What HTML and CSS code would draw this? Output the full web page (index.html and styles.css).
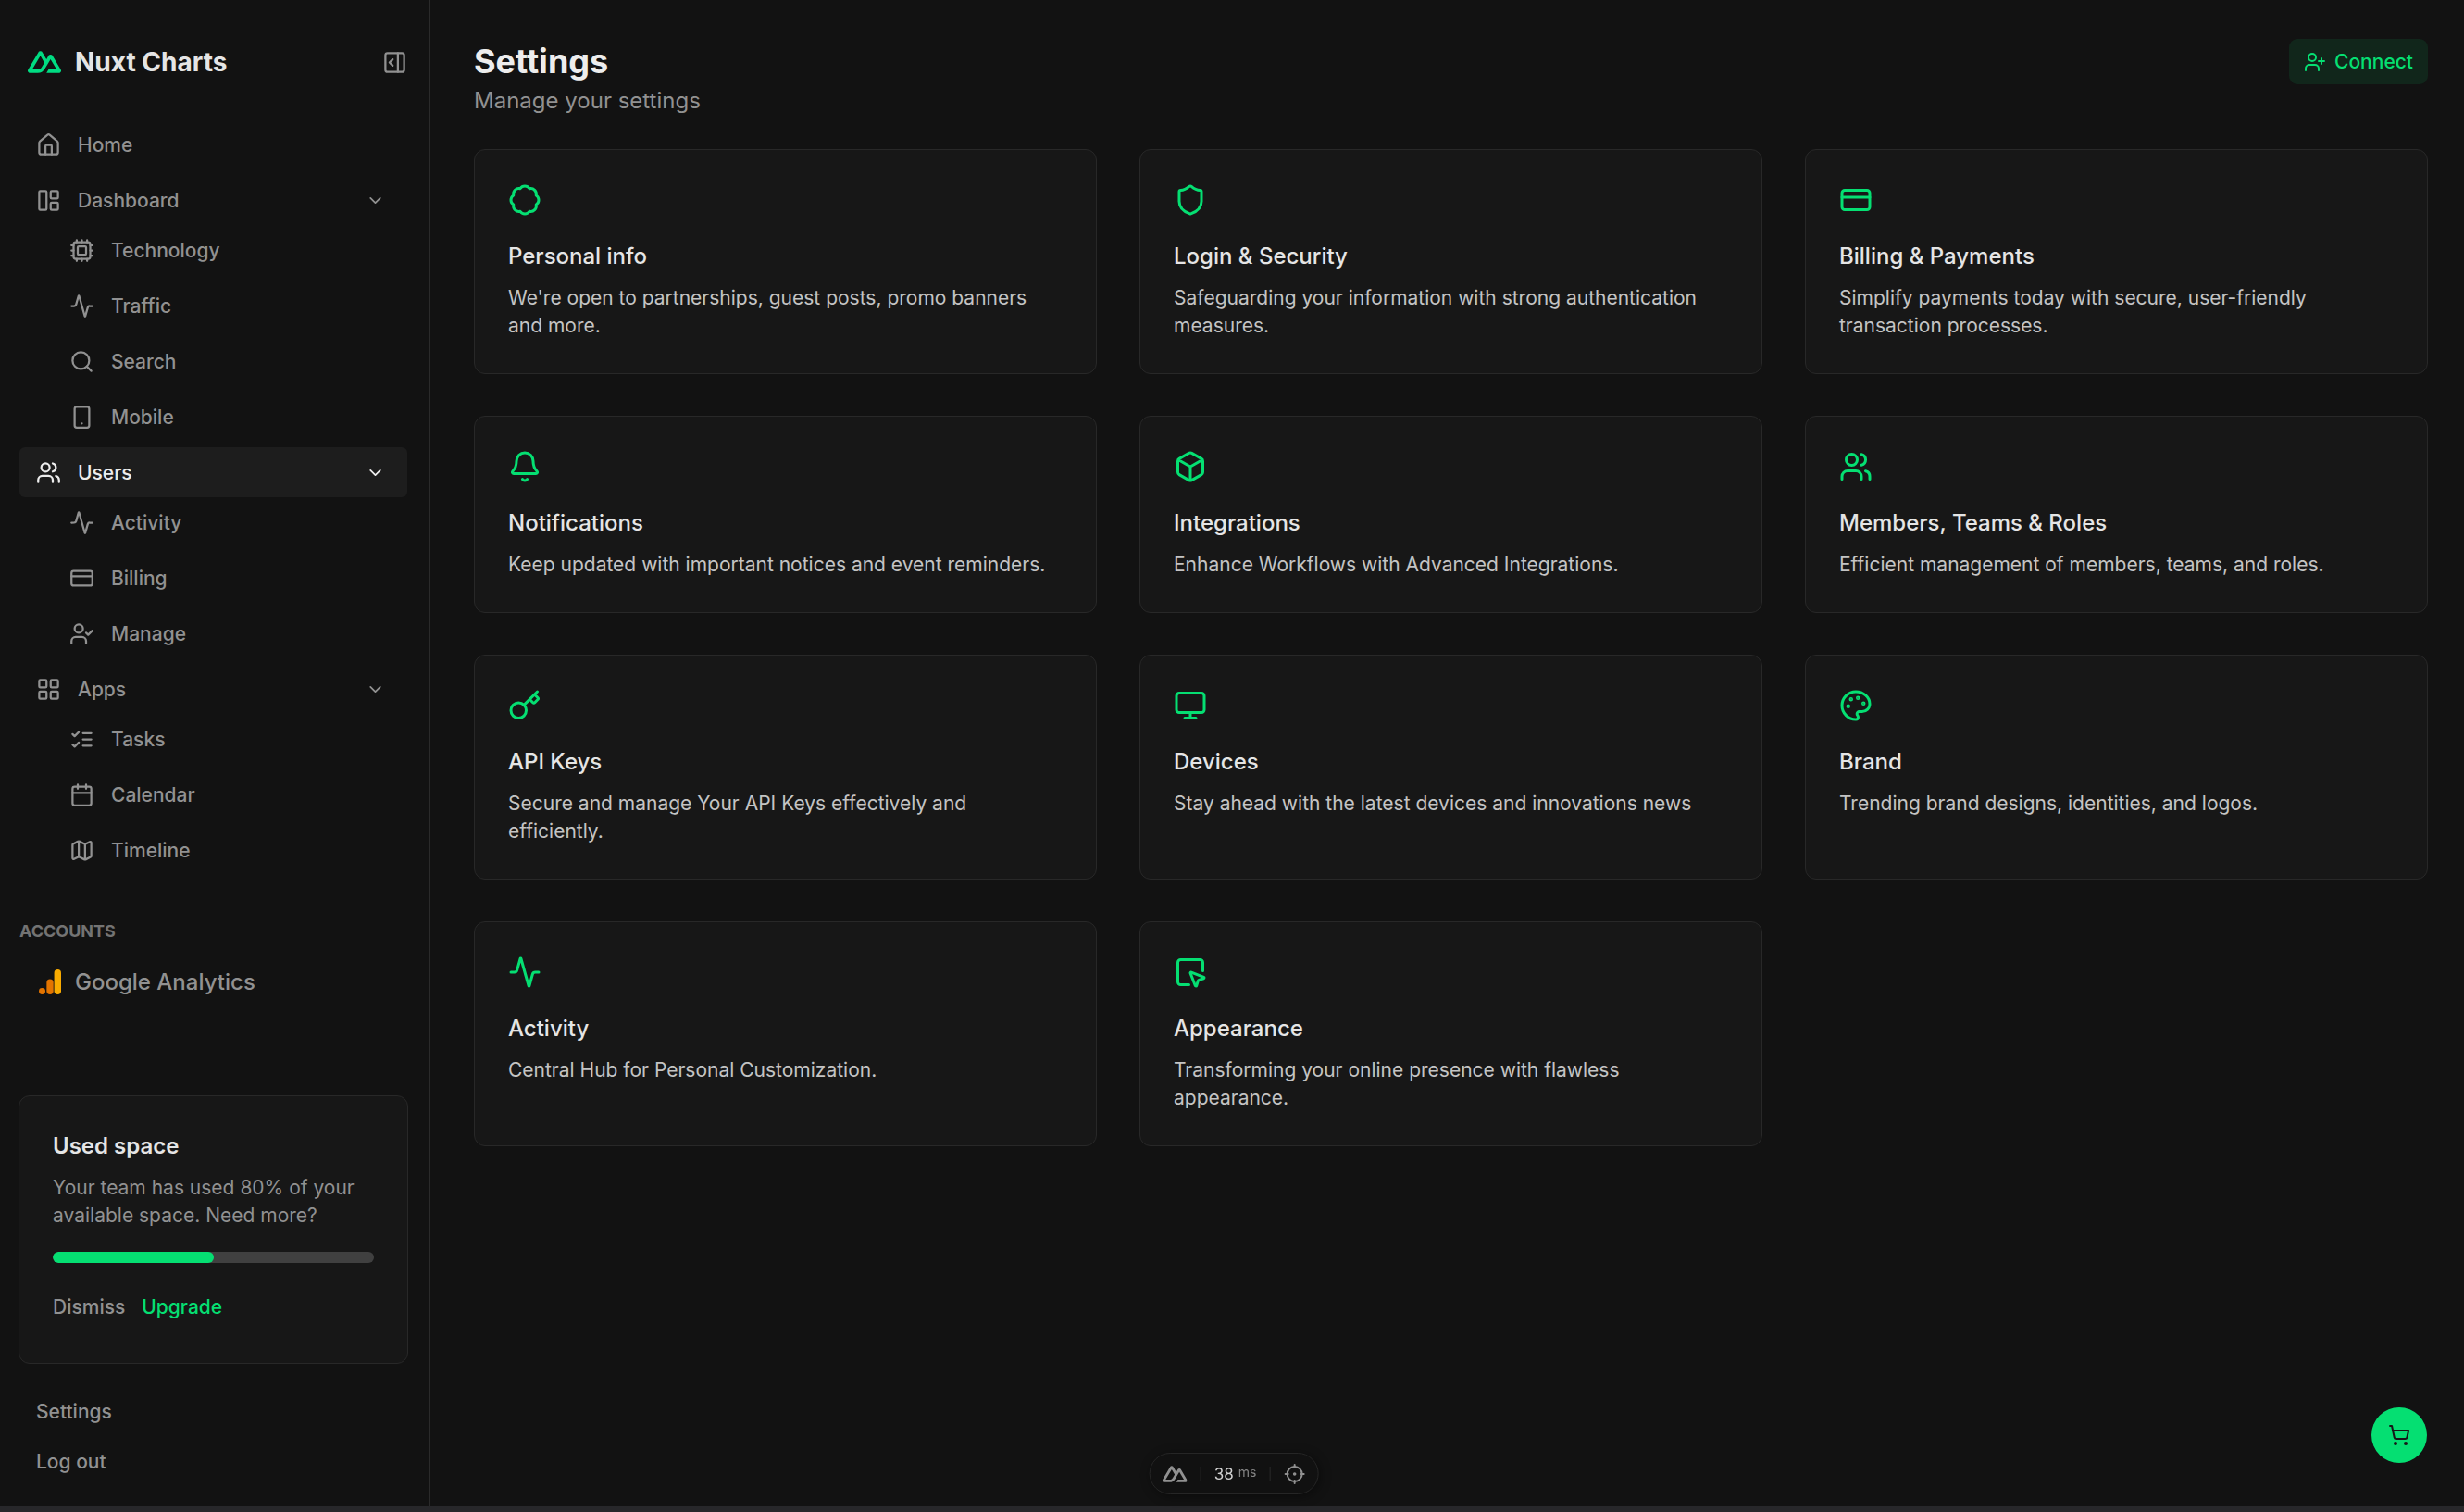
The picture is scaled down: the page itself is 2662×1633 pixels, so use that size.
FILE: index.html
```html
<!DOCTYPE html>
<html lang="en">
  <head>
    <meta charset="utf-8">
    <title>Settings - Nuxt Charts</title>
    <meta name="viewport" content="width=device-width, initial-scale=1">
    <link rel="stylesheet" href="styles.css">
  </head>

  <body>
    <!-- Icon sprite -->
    <svg class="sprite" aria-hidden="true">
      <symbol id="nuxt" viewBox="0 4 24 16"><path fill="currentColor" stroke="none" fill-rule="evenodd" d="M13.464 19.83h8.922c.283 0 .562-.073.807-.21a1.59 1.59 0 0 0 .591-.573 1.53 1.53 0 0 0 0-1.566L17.792 7.414a1.59 1.59 0 0 0-.591-.573 1.652 1.652 0 0 0-1.614 0 1.59 1.59 0 0 0-.59.573l-1.532 2.604-2.995-5.09a1.591 1.591 0 0 0-.591-.574 1.653 1.653 0 0 0-1.614 0 1.591 1.591 0 0 0-.591.573L.217 17.481a1.529 1.529 0 0 0 0 1.566 1.59 1.59 0 0 0 .59.573c.246.138.524.21.807.21h5.6c2.22 0 3.856-.946 4.982-2.79l2.734-4.592 1.464-2.458 4.394 7.381h-5.859zm-6.341-2.46-3.908-.001 5.859-9.842 2.923 4.921-1.957 3.289c-.748 1.197-1.598 1.633-2.917 1.633z"/></symbol>
      <symbol id="panel" viewBox="0 0 24 24"><rect x="3" y="3" width="18" height="18" rx="2"/><path d="M15 3v18M10 15l-3-3 3-3"/></symbol>
      <symbol id="home" viewBox="0 0 24 24"><path d="M15 21v-8a1 1 0 0 0-1-1h-4a1 1 0 0 0-1 1v8"/><path d="M3 10a2 2 0 0 1 .709-1.528l7-5.999a2 2 0 0 1 2.582 0l7 5.999A2 2 0 0 1 21 10v9a2 2 0 0 1-2 2H5a2 2 0 0 1-2-2z"/></symbol>
      <symbol id="dashboard" viewBox="0 0 24 24"><rect x="3" y="3" width="7" height="18" rx="1"/><rect x="14" y="3" width="7" height="7" rx="1"/><rect x="14" y="14" width="7" height="7" rx="1"/></symbol>
      <symbol id="chevron" viewBox="0 0 24 24"><path d="m6 9 6 6 6-6"/></symbol>
      <symbol id="cpu" viewBox="0 0 24 24"><rect x="4" y="4" width="16" height="16" rx="2"/><rect x="8" y="8" width="8" height="8" rx="1"/><path d="M12 20v2M12 2v2M17 20v2M17 2v2M7 20v2M7 2v2M2 12h2M2 17h2M2 7h2M20 12h2M20 17h2M20 7h2"/></symbol>
      <symbol id="activity" viewBox="0 0 24 24"><path d="M22 12h-2.48a2 2 0 0 0-1.93 1.46l-2.35 8.36a.25.25 0 0 1-.48 0L9.24 2.18a.25.25 0 0 0-.48 0l-2.35 8.36A2 2 0 0 1 4.49 12H2"/></symbol>
      <symbol id="search" viewBox="0 0 24 24"><circle cx="11" cy="11" r="8"/><path d="m21 21-4.3-4.3"/></symbol>
      <symbol id="mobile" viewBox="0 0 24 24"><rect x="5" y="2" width="14" height="20" rx="2"/><path d="M12 18h.01"/></symbol>
      <symbol id="users" viewBox="0 0 24 24"><path d="M16 21v-2a4 4 0 0 0-4-4H6a4 4 0 0 0-4 4v2"/><circle cx="9" cy="7" r="4"/><path d="M22 21v-2a4 4 0 0 0-3-3.870M16 3.130a4 4 0 0 1 0 7.750"/></symbol>
      <symbol id="card" viewBox="0 0 24 24"><rect x="2" y="5" width="20" height="14" rx="2"/><path d="M2 10h20"/></symbol>
      <symbol id="user-check" viewBox="0 0 24 24"><path d="m16 11 2 2 4-4"/><path d="M16 21v-2a4 4 0 0 0-4-4H6a4 4 0 0 0-4 4v2"/><circle cx="9" cy="7" r="4"/></symbol>
      <symbol id="user-plus" viewBox="0 0 24 24"><path d="M16 21v-2a4 4 0 0 0-4-4H6a4 4 0 0 0-4 4v2"/><circle cx="9" cy="7" r="4"/><path d="M19 8v6M22 11h-6"/></symbol>
      <symbol id="apps" viewBox="0 0 24 24"><rect x="3" y="3" width="7" height="7" rx="1"/><rect x="14" y="3" width="7" height="7" rx="1"/><rect x="14" y="14" width="7" height="7" rx="1"/><rect x="3" y="14" width="7" height="7" rx="1"/></symbol>
      <symbol id="tasks" viewBox="0 0 24 24"><path d="m3 17 2 2 4-4M3 7l2 2 4-4M13 6h8M13 12h8M13 18h8"/></symbol>
      <symbol id="calendar" viewBox="0 0 24 24"><path d="M8 2v4M16 2v4M3 10h18"/><rect x="3" y="4" width="18" height="18" rx="2"/></symbol>
      <symbol id="map" viewBox="0 0 24 24"><path d="M14.106 5.553a2 2 0 0 0 1.788 0l3.659-1.830A1 1 0 0 1 21 4.619v12.764a1 1 0 0 1-.553.894l-4.553 2.277a2 2 0 0 1-1.788 0l-4.212-2.106a2 2 0 0 0-1.788 0l-3.659 1.830A1 1 0 0 1 3 19.381V6.618a1 1 0 0 1 .553-.894l4.553-2.277a2 2 0 0 1 1.788 0zM15 5.764v15M9 3.236v15"/></symbol>
      <symbol id="analytics" viewBox="0 0 24 24"><g stroke="none"><rect x="17.400" y="0" width="6.600" height="24" rx="3.300" fill="#f9ab00"/><rect x="10.100" y="9.300" width="6.500" height="14.700" rx="3.250" fill="#e37400"/><circle cx="5.800" cy="20.900" r="3.100" fill="#e37400"/></g></symbol>
      <symbol id="badge" viewBox="0 0 24 24"><path d="M3.850 8.620a4 4 0 0 1 4.780-4.770 4 4 0 0 1 6.740 0 4 4 0 0 1 4.780 4.780 4 4 0 0 1 0 6.740 4 4 0 0 1-4.770 4.780 4 4 0 0 1-6.750 0 4 4 0 0 1-4.780-4.770 4 4 0 0 1 0-6.760Z"/></symbol>
      <symbol id="shield" viewBox="0 0 24 24"><path d="M20 13c0 5-3.500 7.500-7.660 8.950a1 1 0 0 1-.670-.010C7.500 20.500 4 18 4 13V6a1 1 0 0 1 1-1c2 0 4.500-1.200 6.240-2.720a1.170 1.170 0 0 1 1.520 0C14.510 3.810 17 5 19 5a1 1 0 0 1 1 1z"/></symbol>
      <symbol id="bell" viewBox="0 0 24 24"><path d="M10.268 21a2 2 0 0 0 3.464 0"/><path d="M3.262 15.326A1 1 0 0 0 4 17h16a1 1 0 0 0 .740-1.673C19.410 13.956 18 12.499 18 8A6 6 0 0 0 6 8c0 4.499-1.411 5.956-2.738 7.326"/></symbol>
      <symbol id="box" viewBox="0 0 24 24"><path d="M21 8a2 2 0 0 0-1-1.730l-7-4a2 2 0 0 0-2 0l-7 4A2 2 0 0 0 3 8v8a2 2 0 0 0 1 1.730l7 4a2 2 0 0 0 2 0l7-4A2 2 0 0 0 21 16ZM3.300 7l8.700 5 8.700-5M12 22V12"/></symbol>
      <symbol id="key" viewBox="0 0 24 24"><path d="m15.500 7.500 2.300 2.300a1 1 0 0 0 1.400 0l2.100-2.100a1 1 0 0 0 0-1.400L19 4M21 2l-9.600 9.600"/><circle cx="7.500" cy="15.500" r="5.500"/></symbol>
      <symbol id="monitor" viewBox="0 0 24 24"><rect x="2" y="3" width="20" height="14" rx="2"/><path d="M8 21h8M12 17v4"/></symbol>
      <symbol id="palette" viewBox="0 0 24 24"><path d="M12 2C6.500 2 2 6.500 2 12s4.500 10 10 10c.926 0 1.648-.746 1.648-1.688 0-.437-.180-.835-.437-1.125-.290-.289-.438-.652-.438-1.125a1.640 1.640 0 0 1 1.668-1.668h1.996c3.051 0 5.555-2.503 5.555-5.554C21.965 6.012 17.461 2 12 2z"/><g fill="currentColor"><circle cx="13.500" cy="6.500" r=".5"/><circle cx="17.500" cy="10.500" r=".5"/><circle cx="8.500" cy="7.500" r=".5"/><circle cx="6.500" cy="12.500" r=".5"/></g></symbol>
      <symbol id="pointer" viewBox="0 0 24 24"><path d="M12.034 12.681a.498.498 0 0 1 .647-.647l9 3.500a.5.5 0 0 1-.033.943l-3.444 1.068a1 1 0 0 0-.660.660l-1.067 3.443a.5.5 0 0 1-.943.033z"/><path d="M21 11V5a2 2 0 0 0-2-2H5a2 2 0 0 0-2 2v14a2 2 0 0 0 2 2h6"/></symbol>
      <symbol id="cart" viewBox="0 0 24 24"><circle cx="8" cy="21" r="1"/><circle cx="19" cy="21" r="1"/><path d="M2.050 2.050h2l2.660 12.420a2 2 0 0 0 2 1.580h9.780a2 2 0 0 0 1.950-1.570l1.650-7.430H5.120"/></symbol>
      <symbol id="target" viewBox="0 0 24 24"><circle cx="12" cy="12" r="8"/><path d="M12 2v3M12 19v3M2 12h3M19 12h3"/><circle cx="12" cy="12" r=".8" fill="currentColor"/></symbol>
    </svg>

    <div class="app">
      <aside class="sidebar">
        <div class="brand">
          <svg class="logo"><use href="#nuxt"/></svg>
          <span class="brand-name">Nuxt Charts</span>
          <button class="icon-button" aria-label="Collapse sidebar"><svg class="icon"><use href="#panel"/></svg></button>
        </div>

        <nav class="nav">
          <a class="nav-item" href="#"><svg class="icon"><use href="#home"/></svg>Home</a>
          <div class="nav-group">
            <button class="nav-item"><svg class="icon"><use href="#dashboard"/></svg>Dashboard<svg class="icon chevron"><use href="#chevron"/></svg></button>
            <div class="nav-children">
              <a class="nav-item" href="#"><svg class="icon"><use href="#cpu"/></svg>Technology</a>
              <a class="nav-item" href="#"><svg class="icon"><use href="#activity"/></svg>Traffic</a>
              <a class="nav-item" href="#"><svg class="icon"><use href="#search"/></svg>Search</a>
              <a class="nav-item" href="#"><svg class="icon"><use href="#mobile"/></svg>Mobile</a>
            </div>
          </div>
          <div class="nav-group">
            <button class="nav-item active"><svg class="icon"><use href="#users"/></svg>Users<svg class="icon chevron"><use href="#chevron"/></svg></button>
            <div class="nav-children">
              <a class="nav-item" href="#"><svg class="icon"><use href="#activity"/></svg>Activity</a>
              <a class="nav-item" href="#"><svg class="icon"><use href="#card"/></svg>Billing</a>
              <a class="nav-item" href="#"><svg class="icon"><use href="#user-check"/></svg>Manage</a>
            </div>
          </div>
          <div class="nav-group">
            <button class="nav-item"><svg class="icon"><use href="#apps"/></svg>Apps<svg class="icon chevron"><use href="#chevron"/></svg></button>
            <div class="nav-children">
              <a class="nav-item" href="#"><svg class="icon"><use href="#tasks"/></svg>Tasks</a>
              <a class="nav-item" href="#"><svg class="icon"><use href="#calendar"/></svg>Calendar</a>
              <a class="nav-item" href="#"><svg class="icon"><use href="#map"/></svg>Timeline</a>
            </div>
          </div>
        </nav>

        <h2 class="section-label">ACCOUNTS</h2>
        <a class="nav-item account" href="#"><svg class="icon"><use href="#analytics"/></svg>Google Analytics</a>

        <div class="sidebar-bottom">
          <section class="usage">
            <h3 class="usage-title">Used space</h3>
            <p class="usage-text" id="usage-text">Your team has used 80% of your available space. Need more?</p>
            <progress class="usage-bar" value="50" max="100" aria-labelledby="usage-text"></progress>
            <div class="usage-actions">
              <button class="text-button">Dismiss</button>
              <button class="text-button green">Upgrade</button>
            </div>
          </section>
          <a class="nav-item" href="#">Settings</a>
          <a class="nav-item" href="#">Log out</a>
        </div>
      </aside>

      <main class="main">
        <header class="header">
          <div>
            <h1 class="title">Settings</h1>
            <p class="subtitle">Manage your settings</p>
          </div>
          <button class="connect"><svg class="icon"><use href="#user-plus"/></svg>Connect</button>
        </header>

        <div class="cards">
          <a class="card" href="#">
            <svg class="icon"><use href="#badge"/></svg>
            <h2 class="card-title">Personal info</h2>
            <p class="card-text">We're open to partnerships, guest posts, promo banners and more.</p>
          </a>
          <a class="card" href="#">
            <svg class="icon"><use href="#shield"/></svg>
            <h2 class="card-title">Login &amp; Security</h2>
            <p class="card-text">Safeguarding your information with strong authentication measures.</p>
          </a>
          <a class="card" href="#">
            <svg class="icon"><use href="#card"/></svg>
            <h2 class="card-title">Billing &amp; Payments</h2>
            <p class="card-text">Simplify payments today with secure, user-friendly transaction processes.</p>
          </a>
          <a class="card" href="#">
            <svg class="icon"><use href="#bell"/></svg>
            <h2 class="card-title">Notifications</h2>
            <p class="card-text">Keep updated with important notices and event reminders.</p>
          </a>
          <a class="card" href="#">
            <svg class="icon"><use href="#box"/></svg>
            <h2 class="card-title">Integrations</h2>
            <p class="card-text">Enhance Workflows with Advanced Integrations.</p>
          </a>
          <a class="card" href="#">
            <svg class="icon"><use href="#users"/></svg>
            <h2 class="card-title">Members, Teams &amp; Roles</h2>
            <p class="card-text">Efficient management of members, teams, and roles.</p>
          </a>
          <a class="card" href="#">
            <svg class="icon"><use href="#key"/></svg>
            <h2 class="card-title">API Keys</h2>
            <p class="card-text">Secure and manage Your API Keys effectively and efficiently.</p>
          </a>
          <a class="card" href="#">
            <svg class="icon"><use href="#monitor"/></svg>
            <h2 class="card-title">Devices</h2>
            <p class="card-text">Stay ahead with the latest devices and innovations news</p>
          </a>
          <a class="card" href="#">
            <svg class="icon"><use href="#palette"/></svg>
            <h2 class="card-title">Brand</h2>
            <p class="card-text">Trending brand designs, identities, and logos.</p>
          </a>
          <a class="card" href="#">
            <svg class="icon"><use href="#activity"/></svg>
            <h2 class="card-title">Activity</h2>
            <p class="card-text">Central Hub for Personal Customization.</p>
          </a>
          <a class="card" href="#">
            <svg class="icon"><use href="#pointer"/></svg>
            <h2 class="card-title">Appearance</h2>
            <p class="card-text">Transforming your online presence with flawless appearance.</p>
          </a>
        </div>
      </main>
    </div>

    <div class="bottom-strip"></div>

    <!-- Floating controls -->
    <button class="cart" aria-label="Cart"><svg class="icon"><use href="#cart"/></svg></button>

    <div class="devtools">
      <button class="icon-button" aria-label="Toggle DevTools"><svg class="devtools-logo"><use href="#nuxt"/></svg></button>
      <span class="divider"></span>
      <span class="timing">38 <span class="unit">ms</span></span>
      <span class="divider"></span>
      <button class="icon-button" aria-label="Toggle inspector"><svg class="icon"><use href="#target"/></svg></button>
    </div>
  </body>
</html>
```
FILE: styles.css
```css
* {
  box-sizing: border-box;
}

body {
  display: flex;
  flex-direction: column;
  min-height: 100vh;
  margin: 0;
  font-family: Inter, "Liberation Sans", sans-serif;
  font-size: 21px;
  line-height: 30px;
  background-color: #121212;
  color: #919191;
}

h1, h2, h3, p {
  margin: 0;
}

a {
  color: inherit;
  text-decoration: none;
}

button {
  padding: 0;
  border: none;
  background: none;
  color: inherit;
  font: inherit;
  cursor: pointer;
}

.sprite {
  display: none;
}

.icon {
  display: block;
  flex-shrink: 0;
  width: 27px;
  height: 27px;
  fill: none;
  stroke: currentColor;
  stroke-width: 2;
  stroke-linecap: round;
  stroke-linejoin: round;
}

.app {
  display: flex;
  flex: 1;
}

/* ----------------------------------- Sidebar */
.sidebar {
  display: flex;
  flex-direction: column;
  flex-shrink: 0;
  width: 465px;
  padding: 48px 24px 22px 21px;
  border-right: 1px solid #2a2a2a;
}

.brand {
  display: flex;
  align-items: center;
  height: 38px;
  margin-bottom: 43px;
  padding-left: 9px;
}

.logo {
  width: 36px;
  height: 24px;
  color: #00dc82;
}

.brand-name {
  margin: 0 auto 0 15px;
  font-size: 28px;
  font-weight: 700;
  color: #e5e5e5;
}

.nav {
  display: flex;
  flex-direction: column;
  gap: 6px;
}

.nav-children {
  display: flex;
  flex-direction: column;
  gap: 6px;
  padding-left: 36px;
}

.nav-item {
  display: flex;
  align-items: center;
  gap: 18px;
  width: 100%;
  height: 54px;
  padding: 1px 18px 0;
  border-radius: 6px;
  font-weight: 500;
}

.nav-item:hover {
  color: #e5e5e5;
}

.nav-item.active {
  background-color: #1d1d1d;
  color: #ededed;
}

.chevron {
  width: 21px;
  height: 21px;
  margin: 0 6px 0 auto;
}

.section-label {
  margin: 46px 0 12px;
  font-size: 18px;
  font-weight: 700;
  color: #737373;
}

.account {
  gap: 15px;
  font-size: 24px;
}

.sidebar-bottom {
  margin-top: auto;
}

/* ----------------------------------- Used space */
.usage {
  margin: 0 -1px 24px;
  padding: 36px;
  border: 1px solid #282828;
  border-radius: 12px;
  background-color: #171717;
}

.usage-title {
  margin-bottom: 12px;
  font-size: 24px;
  line-height: 36px;
  font-weight: 600;
  color: #e5e5e5;
}

.usage-bar {
  -webkit-appearance: none;
  appearance: none;
  display: block;
  width: 100%;
  height: 12px;
  margin: 24px 0;
  border: none;
  border-radius: 6px;
  overflow: hidden;
}

.usage-bar::-webkit-progress-bar {
  background: #404040;
}

.usage-bar::-webkit-progress-value {
  border-radius: 6px;
  background: #05df72;
}

.usage-actions {
  display: flex;
  gap: 18px;
}

.text-button {
  height: 48px;
  font-weight: 500;
}

.green {
  color: #05df72;
}

/* ----------------------------------- Main */
.main {
  flex: 1;
  padding: 42px 39px 42px 47px;
}

.header {
  display: flex;
  justify-content: space-between;
  align-items: flex-start;
  margin-bottom: 33px;
}

.title {
  font-size: 36px;
  line-height: 48px;
  font-weight: 700;
  color: #ededed;
}

.subtitle {
  font-size: 24px;
  line-height: 38px;
}

.connect {
  display: flex;
  align-items: center;
  gap: 9px;
  height: 49px;
  padding: 0 16px;
  border-radius: 9px;
  background-color: #11261b;
  color: #05df72;
  font-weight: 500;
}

.connect .icon {
  width: 24px;
  height: 24px;
}

.cards {
  display: grid;
  grid-template-columns: repeat(3, 1fr);
  gap: 45px 46px;
}

.card {
  padding: 36px;
  border: 1px solid #282828;
  border-radius: 12px;
  background-color: #171717;
}

.card .icon {
  width: 36px;
  height: 36px;
  color: #05df72;
}

.card-title {
  margin: 25px 0 12px;
  font-size: 24px;
  line-height: 36px;
  font-weight: 500;
  color: #e5e5e5;
}

.card-text {
  color: #c4c4c4;
}

/* ----------------------------------- Floating controls */
.bottom-strip {
  height: 6px;
  background-color: #27272a;
}

.cart {
  position: fixed;
  right: 40px;
  bottom: 53px;
  display: flex;
  align-items: center;
  justify-content: center;
  width: 60px;
  height: 60px;
  border-radius: 50%;
  background-color: #05df72;
  color: #171717;
}

.cart .icon {
  width: 24px;
  height: 24px;
}

.devtools {
  position: fixed;
  left: 50%;
  bottom: 19px;
  transform: translateX(-50%);
  display: flex;
  align-items: center;
  gap: 14px;
  height: 45px;
  margin-left: 2px;
  padding: 0 13px;
  border: 1px solid #262626;
  border-radius: 23px;
  background-color: #111111;
  box-shadow: 2px 2px 12px rgba(0, 0, 0, 0.4);
}

.devtools-logo {
  display: block;
  width: 27px;
  height: 18px;
}

.devtools .icon {
  width: 24px;
  height: 24px;
}

.divider {
  width: 1px;
  height: 15px;
  background-color: #2a2a2a;
}

.timing {
  display: flex;
  gap: 5px;
  font-size: 17px;
  line-height: 24px;
  color: #d0d0d0;
}

.unit {
  font-size: 14px;
  line-height: 20px;
  color: #858585;
}
```
